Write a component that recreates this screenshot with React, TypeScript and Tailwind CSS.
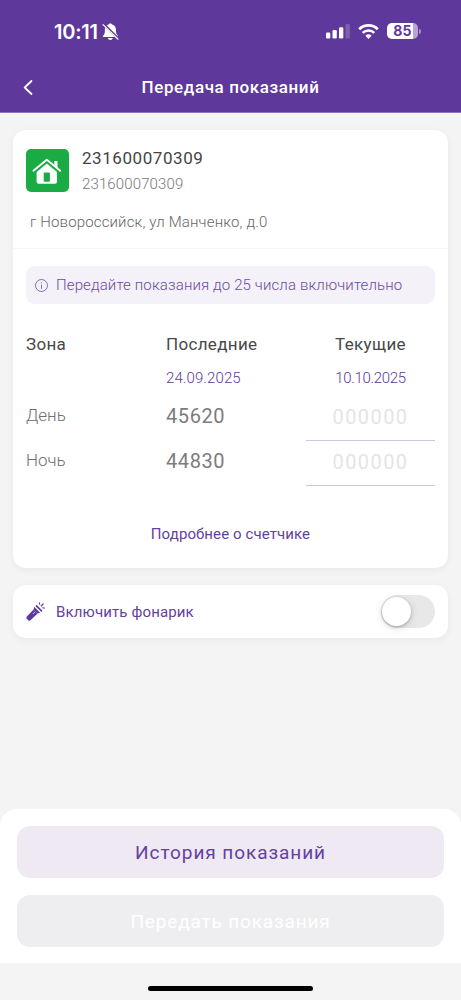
import { useState } from 'react';

const readings = [
  { zone: 'День', last: '45620' },
  { zone: 'Ночь', last: '44830' },
];

function BellOffIcon() {
  return (
    <svg className="w-[17px] h-[18px]" viewBox="0 0 17 18" fill="none">
      <path
        d="M8.3 0.4c1 0 1.700.5 1.900 1.200 2.400.7 3.700 2.500 3.700 4.800 0 3.500.6 4.900 1.800 6 .6.6.3 1.600-.7 1.600H2c-1 0-1.300-1-.7-1.600 1.200-1.100 1.600-2.500 1.600-6 0-2.300 1.300-4.100 3.700-4.800C6.800.9 7.400.4 8.300.4z"
        fill="#fff"
      />
      <path d="M5.800 15h5c-.3 1.300-1.300 2-2.500 2s-2.200-.7-2.500-2z" fill="#fff" />
      <path d="M1.400 1l14.600 14.400" stroke="#5e399b" strokeWidth="2.600" />
      <path d="M1 1.600l15 14.600" stroke="#fff" strokeWidth="1.200" strokeLinecap="round" />
    </svg>
  );
}

function SignalIcon() {
  return (
    <svg className="w-6 h-[15px]" viewBox="0 0 24 15" fill="#fff">
      <rect x="0" y="8.500" width="4.300" height="6" rx="1.200" />
      <rect x="6.500" y="6" width="4.300" height="8.500" rx="1.200" />
      <rect x="13" y="3.200" width="4.300" height="11.300" rx="1.200" />
      <rect x="19.500" y="0" width="4.300" height="14.500" rx="1.200" opacity="0.2" />
    </svg>
  );
}

function WifiIcon() {
  return (
    <svg className="w-[21px] h-[15px]" viewBox="0 0 21 15" fill="none" stroke="#fff">
      <path d="M1.200 5.200a13.300 13.300 0 0 1 18.600 0" strokeWidth="2.700" />
      <path d="M4.700 8.900a8.300 8.300 0 0 1 11.600 0" strokeWidth="2.500" />
      <path d="M10.500 15l-3.100-3.200a4.500 4.500 0 0 1 6.200 0z" fill="#fff" stroke="none" />
    </svg>
  );
}

function Battery() {
  return (
    <div className="flex items-center gap-px">
      <div className="w-[31px] h-4 rounded-[5px] overflow-hidden bg-[linear-gradient(90deg,#fff_83%,#b7a4d5_83%)] text-center text-[14px] leading-4 font-bold tracking-[0.3px] text-[#5e399b] font-['Inter',sans-serif]">
        85
      </div>
      <div className="w-0.5 h-[5px] rounded-r-full bg-[#a48ec9]" />
    </div>
  );
}

function HouseIcon() {
  return (
    <svg className="w-[43px] h-[43px]" viewBox="0 0 43 43">
      <rect width="43" height="43" rx="5" fill="#1aab45" />
      <path d="M28.300 12h3.200v7.500l-3.200-2.600z" fill="#fff" />
      <path
        d="M7.400 21.700L20.800 10.700L34.200 21.700"
        fill="none"
        stroke="#fff"
        strokeWidth="1.800"
        strokeLinecap="round"
        strokeLinejoin="round"
      />
      <path
        d="M20.800 14.500L31 23v9.700a2 2 0 0 1-2 2H12.600a2 2 0 0 1-2-2V23z"
        fill="#fff"
      />
      <rect x="17.700" y="23.500" width="6.200" height="9.200" rx="1" fill="#1aab45" />
    </svg>
  );
}

function InfoIcon() {
  return (
    <svg className="w-[13px] h-[13px]" viewBox="0 0 13 13" fill="none" stroke="#7a60ab" strokeWidth="0.900">
      <circle cx="6.500" cy="6.500" r="6" />
      <path d="M6.500 5.600v4.200M6.500 3.300v1.100" />
    </svg>
  );
}

function FlashlightIcon() {
  return (
    <svg className="w-[19px] h-[19px]" viewBox="0 0 19 19" fill="#5e399b">
      <path d="M7.600 7.600l4 4-6.800 6.300a2 2 0 0 1-2.900 0l-.8-.8a2 2 0 0 1 0-2.900z" />
      <path d="M7.600 7.600l.6-2.800 5.900 5.900-2.500.9z" />
      <path d="M9.400 3.900l1.100-1.100 6 6-1.100 1.100z" />
      <path d="M8.300 10.600l-.9.900" stroke="#fff" strokeWidth="1" strokeLinecap="round" />
      <path
        d="M13.300.8l.4 1.500M15.200 4l2-2M16.800 5.700l1.500.4"
        fill="none"
        stroke="#5e399b"
        strokeWidth="1.100"
        strokeLinecap="round"
      />
    </svg>
  );
}

function Header() {
  return (
    <header className="h-[113px] bg-[#5e399b] border-b border-[#8f76b8] text-white">
      <div className="flex items-center justify-between h-[62px] pl-[54px] pr-10">
        <div className="flex items-center gap-1 pt-px font-['Inter',sans-serif]">
          <span className="text-[20px] leading-6 font-semibold tracking-[-0.25px]">10:11</span>
          <BellOffIcon />
        </div>
        <div className="flex items-center gap-2">
          <SignalIcon />
          <WifiIcon />
          <Battery />
        </div>
      </div>
      <div className="grid grid-cols-[60px_1fr_60px] items-center h-[51px]">
        <button className="pl-[23px]" aria-label="Назад">
          <svg className="w-[10px] h-[15px]" viewBox="0 0 10 15" fill="none" stroke="#fff" strokeWidth="1.800">
            <path d="M8.500 1L1.700 7.500L8.500 14" strokeLinecap="round" strokeLinejoin="round" />
          </svg>
        </button>
        <h1 className="text-center text-[17px] font-medium tracking-[0.6px]">Передача показаний</h1>
      </div>
    </header>
  );
}

function MeterCard() {
  return (
    <section className="bg-white rounded-[13px] shadow-[0_2px_8px_rgba(0,0,0,0.05)]">
      <div className="h-[119px] pt-[19px] px-[13px] border-b border-[#f5f5f5]">
        <div className="flex gap-[13px] h-[43px]">
          <HouseIcon />
          <div className="-mt-0.5">
            <p className="text-[17px] leading-[22px] tracking-[0.57px] text-[#444]">231600070309</p>
            <p className="mt-1 text-[15px] leading-[22px] tracking-[0.13px] font-light text-[#777]">231600070309</p>
          </div>
        </div>
        <p className="mt-[18px] pl-1 text-[15px] leading-6 tracking-[0.15px] font-light text-[#666]">
          г Новороссийск, ул Манченко, д.0
        </p>
      </div>

      <div className="px-[13px] pt-[17px] pb-[19px]">
        <div className="flex items-center gap-2 h-[38px] pl-[9px] rounded-[9px] bg-[#f4f1f9] text-[#6a4ca1]">
          <InfoIcon />
          <p className="pt-px text-[15px] tracking-[0.13px] font-light">Передайте показания до 25 числа включительно</p>
        </div>

        <div className="mt-[26px] grid grid-cols-[140px_140px_1fr] items-center h-[30px] text-[17px] tracking-[0.33px] text-[#484848]">
          <span>Зона</span>
          <span>Последние</span>
          <span className="text-center">Текущие</span>
        </div>
        <div className="grid grid-cols-[140px_140px_1fr] items-center h-[36px] text-[15px] font-light text-[#5e399b]">
          <span className="col-start-2 tracking-[0.1px]">24.09.2025</span>
          <span className="text-center tracking-[-0.3px]">10.10.2025</span>
        </div>
        {readings.map((row) => (
          <div key={row.zone} className="grid grid-cols-[140px_140px_1fr] h-[45px]">
            <span className="text-[17px] leading-[39px] font-light text-[#707070]">{row.zone}</span>
            <span className="text-[20px] leading-[40px] tracking-[0.6px] text-[#7c7c7c]">{row.last}</span>
            <input
              className="w-full h-[45px] pb-0.5 text-center text-[20px] tracking-[1.4px] text-[#444] placeholder:text-[#e4e4ea] border-b border-[#cdc6df] outline-none"
              placeholder="000000"
              inputMode="numeric"
            />
          </div>
        ))}
        <button className="block mx-auto mt-[33px] h-[30px] text-[15px] tracking-[0.1px] text-[#6441a0]">
          Подробнее о счетчике
        </button>
      </div>
    </section>
  );
}

function FlashlightCard() {
  const [on, setOn] = useState(false);

  return (
    <section className="flex items-center h-[53px] px-[13px] bg-white rounded-[13px] shadow-[0_2px_8px_rgba(0,0,0,0.05)]">
      <FlashlightIcon />
      <span className="ml-[11px] pt-px text-[15px] tracking-[0.13px] text-[#6441a0]">Включить фонарик</span>
      <button
        role="switch"
        aria-checked={on}
        aria-label="Включить фонарик"
        onClick={() => setOn(!on)}
        className={`flex items-center ml-auto w-[54px] h-[33px] px-px rounded-full ${on ? 'justify-end bg-[#5e399b]' : 'bg-[#e8e8e8]'}`}
      >
        <span className="w-[29px] h-[29px] rounded-full bg-white shadow-[0_1px_3px_rgba(0,0,0,0.25),0_2px_8px_rgba(0,0,0,0.12)]" />
      </button>
    </section>
  );
}

export default function App() {
  return (
    <div className="flex flex-col h-[1000px] bg-[#f4f4f4] font-['Roboto','Liberation_Sans',sans-serif]">
      <Header />
      <main className="flex-1 flex flex-col gap-[17px] px-[13px] pt-[17px]">
        <MeterCard />
        <FlashlightCard />
      </main>
      <div className="flex flex-col gap-[17px] h-[154px] px-[17px] pt-[17px] bg-white rounded-t-[17px]">
        <button className="h-[52px] pt-0.5 rounded-[13px] bg-[#efe9f4] text-[19px] tracking-[0.93px] text-[#6441a0]">
          История показаний
        </button>
        <button className="h-[52px] pt-0.5 rounded-[13px] bg-[#eeeef0] text-[19px] tracking-[0.85px] text-white" disabled>
          Передать показания
        </button>
      </div>
      <div className="flex justify-center h-[37px] pt-[23px]">
        <div className="w-[165px] h-[5px] rounded-full bg-black" />
      </div>
    </div>
  );
}
